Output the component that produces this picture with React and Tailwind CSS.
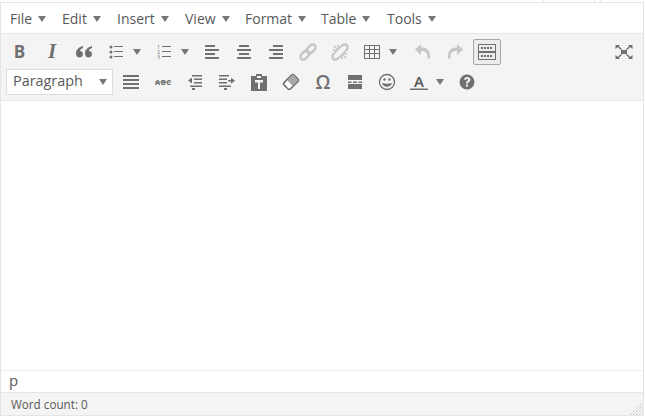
import React from "react";

const MENUS = [
  { label: "File", width: "w-[52px]" },
  { label: "Edit", width: "w-[55px]" },
  { label: "Insert", width: "w-[68px]" },
  { label: "View", width: "w-[60px]" },
  { label: "Format", width: "w-[76px]" },
  { label: "Table", width: "w-[66px]" },
  { label: "Tools", width: "w-[60px]" },
];

const Caret = ({ className = "" }) => (
  <span className={`inline-block w-0 h-0 border-x-[4px] border-x-transparent border-t-[6px] border-t-[#777] ${className}`}></span>
);

const Icon = ({ children, faded }) => (
  <svg width="18" height="18" viewBox="0 0 18 18" fill="#707070" className={`overflow-visible ${faded ? "opacity-35" : ""}`}>
    {children}
  </svg>
);

const Btn = ({ children, caret, wide, active, faded }) => (
  <div className={`flex items-center h-[26px] ${wide ? "w-[48px] pl-[7px]" : "w-[32px] justify-center"}`}>
    {active ? (
      <div className="flex items-center justify-center w-[28px] h-[26px] border border-[#a8a8a8] rounded-[2px] bg-[#ececec]">{children}</div>
    ) : (
      <Icon faded={faded}>{children}</Icon>
    )}
    {caret && <Caret className="ml-[8px]" />}
  </div>
);

const Lines = ({ rows, h = 2 }) => rows.map(([x, y, w], i) => <rect key={i} x={x} y={y} width={w} height={h} />);

const Chain = () => (
  <g fill="none" stroke="#707070" strokeWidth="2.400">
    <rect x="-6" y="-3" width="10" height="6" rx="3" transform="translate(6.500 11.500) rotate(-45)" />
    <rect x="-4" y="-3" width="10" height="6" rx="3" transform="translate(11.500 6.500) rotate(-45)" />
  </g>
);

const App = () => {
  return (
    <div className="w-[645px] h-[418px] bg-white font-['Open_Sans',sans-serif] overflow-hidden">
      <div className="flex h-[2px] pl-[543px]">
        <div className="w-[52px] border-x border-[#e5e5e5]"></div>
        <div className="w-[45px] ml-[5px] border-l border-[#e5e5e5]"></div>
      </div>
      <div className="w-[644px] h-[414px] border border-[#e5e5e5] flex flex-col">
        {/* menubar */}
        <div className="h-[30px] flex items-center pl-[9px] text-[14px] text-[#595959] shrink-0">
          {MENUS.map((m) => (
            <div key={m.label} className={`flex items-center gap-[6px] shrink-0 ${m.width}`}>
              <span>{m.label}</span>
              <Caret className="mt-[2px]" />
            </div>
          ))}
        </div>

        {/* toolbar */}
        <div className="h-[68px] shrink-0 bg-[#f4f4f4] border-y border-[#e5e5e5] pl-[3px] pt-[4px] flex flex-col gap-[3px]">
          <div className="flex items-center h-[27px]">
            <Btn>
              <text x="8.500" y="15" fontFamily="'Open Sans',sans-serif" fontWeight="700" fontSize="17" textAnchor="middle">B</text>
            </Btn>
            <Btn>
              <text x="9" y="15" fontFamily="'Liberation Serif',serif" fontStyle="italic" fontWeight="700" fontSize="21" textAnchor="middle">I</text>
            </Btn>
            <Btn>
              <path d="M8 3C4 4 1 6.500 1 10.500 1 13 2.500 14.500 4.500 14.500S8 13 8 11 6.500 8 5 8C5 6.500 6.500 5.500 8 5z M17 3C13 4 10 6.500 10 10.500 10 13 11.500 14.500 13.500 14.500S17 13 17 11 15.500 8 14 8C14 6.500 15.500 5.500 17 5z" />
            </Btn>
            <Btn wide caret>
              <circle cx="4" cy="4" r="1.500" /><circle cx="4" cy="9" r="1.500" /><circle cx="4" cy="14" r="1.500" />
              <Lines h={1} rows={[[7, 3, 9], [7, 8, 9], [7, 13, 9]]} />
            </Btn>
            <Btn wide caret>
              <text x="3.500" y="6" fontSize="5.500" fontFamily="'Open Sans',sans-serif" textAnchor="middle">1</text>
              <text x="3.500" y="11" fontSize="5.500" fontFamily="'Open Sans',sans-serif" textAnchor="middle">2</text>
              <text x="3.500" y="16" fontSize="5.500" fontFamily="'Open Sans',sans-serif" textAnchor="middle">3</text>
              <Lines h={1} rows={[[7, 3, 9], [7, 8, 9], [7, 13, 9]]} />
            </Btn>
            <Btn><Lines rows={[[2, 2, 10], [2, 6, 14], [2, 10, 10], [2, 14, 14]]} /></Btn>
            <Btn><Lines rows={[[4, 2, 10], [2, 6, 14], [4, 10, 10], [2, 14, 14]]} /></Btn>
            <Btn><Lines rows={[[6, 2, 10], [2, 6, 14], [6, 10, 10], [2, 14, 14]]} /></Btn>
            <Btn faded><Chain /></Btn>
            <Btn faded>
              <Chain />
              <path d="M5.500 12.500L12.500 5.500" stroke="#f4f4f4" strokeWidth="5" />
              <path d="M3 3L7 7 M15 15L11 11 M7 1.500L8 6 M11 16.500L10 12 M1.500 7L6 8 M16.500 11L12 10" stroke="#707070" strokeWidth="1.500" />
            </Btn>
            <Btn wide caret>
              <path d="M1 2h16v14H1z M2 3v3h4V3z M7 3v3h4V3z M12 3v3h4V3z M2 7v3h4V7z M7 7v3h4V7z M12 7v3h4V7z M2 11v4h4v-4z M7 11v4h4v-4z M12 11v4h4v-4z" fillRule="evenodd" />
            </Btn>
            <div className="w-[3px]"></div>
            <Btn faded><path d="M1 6.500L7 1v3.500c5 0 9 2.500 9 8.500v2.500h-2.500V13c0-3-2-5-6.500-5v4z" /></Btn>
            <Btn faded><path d="M17 6.500L11 1v3.500c-5 0-9 2.500-9 8.500v2.500h2.500V13c0-3 2-5 6.500-5v4z" /></Btn>
            <Btn active>
              <svg width="18" height="16" viewBox="0 0 18 16" fill="none" stroke="#707070">
                <rect x="0.500" y="0.500" width="17" height="7" />
                <rect x="0.500" y="8.500" width="17" height="7" />
                <path d="M3 4h12 M3 12h12" strokeWidth="2" strokeDasharray="2 1" />
              </svg>
            </Btn>
            <div className="ml-auto mr-[3px]">
              <Btn>
                <rect x="6" y="7" width="6" height="4" />
                <g stroke="#707070" strokeWidth="1.500">
                  <path d="M2.500 3L6.500 6.500 M15.500 3L11.500 6.500 M2.500 15L6.500 11.500 M15.500 15L11.500 11.500" />
                </g>
                <path d="M0.500 2h4.500L0.500 6z M17.500 2h-4.500l4.500 4z M0.500 16h4.500L0.500 12z M17.500 16h-4.500l4.500-4z" />
              </Btn>
            </div>
          </div>

          <div className="flex items-center h-[27px]">
            <div className="w-[107px] h-[26px] ml-[2px] mr-[2px] bg-white border border-[#dcdcdc] flex items-center justify-between pl-[6px] pr-[5px] text-[14.400px] text-[#595959]">
              <span className="-mt-[1px]">Paragraph</span>
              <Caret />
            </div>
            <Btn><Lines rows={[[1, 2, 16], [1, 6, 16], [1, 10, 16], [1, 14, 16]]} /></Btn>
            <Btn>
              <text x="9" y="12" fontSize="7.500" fontWeight="700" fontFamily="'Open Sans',sans-serif" textAnchor="middle" textLength="16">ABC</text>
              <rect x="1" y="8.500" width="16" height="1" />
            </Btn>
            <Btn>
              <Lines h={1.500} rows={[[6, 2, 10], [8, 5.500, 8], [8, 9, 8], [4, 12.500, 12]]} />
              <path d="M2 7.500L6 4.500v6z" />
              <rect x="6" y="15" width="3" height="2" />
            </Btn>
            <Btn>
              <Lines h={1.500} rows={[[1, 2, 10], [1, 5.500, 8], [1, 9, 8], [1, 12.500, 12]]} />
              <rect x="10" y="7" width="4" height="1.500" />
              <path d="M17 7.700L13 4.700v6z" />
              <rect x="6" y="15" width="3" height="2" />
            </Btn>
            <Btn>
              <path fillRule="evenodd" d="M1 3h5V1h6v2h5v15H1z M7 3v2h4V3z M5 7v2.500h3V16h2V9.500h3V7z" />
            </Btn>
            <Btn>
              <rect x="-7" y="-4.500" width="14" height="9" rx="2" transform="translate(9 9) rotate(-45)" fill="#fff" stroke="#707070" strokeWidth="1.600" />
              <rect x="-1.500" y="-4" width="8" height="8" rx="1" transform="translate(9 9) rotate(-45)" fill="#a8a8a8" />
            </Btn>
            <Btn>
              <text x="9" y="16" fontSize="19" fontWeight="600" fontFamily="'Open Sans',sans-serif" textAnchor="middle">Ω</text>
            </Btn>
            <Btn>
              <path d="M2 2h14v5H2z M2 11h14v5H2z M2 8.500h3.500v1.500H2z M7 8.500h4v1.500H7z M12.500 8.500H16v1.500h-3.500z" />
            </Btn>
            <Btn>
              <circle cx="9" cy="9" r="7.500" fill="none" stroke="#707070" strokeWidth="1.300" />
              <circle cx="6.500" cy="6.500" r="1.200" /><circle cx="11.500" cy="6.500" r="1.200" />
              <path d="M4 10c1 5 9 5 10 0-3 1-7 1-10 0z" />
            </Btn>
            <Btn wide caret>
              <text x="9" y="13.500" fontSize="15" fontWeight="600" fontFamily="'Open Sans',sans-serif" textAnchor="middle" fill="#555">A</text>
              <rect x="0" y="15.500" width="18" height="1.500" />
            </Btn>
            <Btn>
              <path fillRule="evenodd" d="M9 1.500a7.500 7.500 0 1 0 0 15 7.500 7.500 0 0 0 0-15z M6 6.500C6.500 4.800 7.700 4 9.200 4c2 0 3.200 1.200 3.200 2.700 0 2.200-2.400 2.200-2.400 3.800H8c0-2.500 2.200-2.500 2.200-3.700 0-.6-.4-1-1.100-1-.7 0-1.100.4-1.300 1.100z M8 11.500h2v2H8z" />
            </Btn>
          </div>
        </div>

        {/* edit area */}
        <div className="flex-1"></div>

        {/* path */}
        <div className="h-[22px] shrink-0 border-t border-[#eeeeee] pl-[8px] text-[15px] leading-[19px] text-[#595959]">p</div>

        {/* status */}
        <div className="relative h-[23px] shrink-0 bg-[#f4f4f4] border-t border-[#e5e5e5] pl-[10px] text-[11.700px] leading-[22px] text-[#595959]">
          Word count: 0
          <svg width="13" height="13" viewBox="0 0 13 13" className="absolute right-0 bottom-0" stroke="#b4b4b4" strokeDasharray="1 1">
            <path d="M0 13L13 0 M3 13L13 3 M6 13L13 6 M9 13L13 9" />
          </svg>
        </div>
      </div>
    </div>
  );
};

export default App;
